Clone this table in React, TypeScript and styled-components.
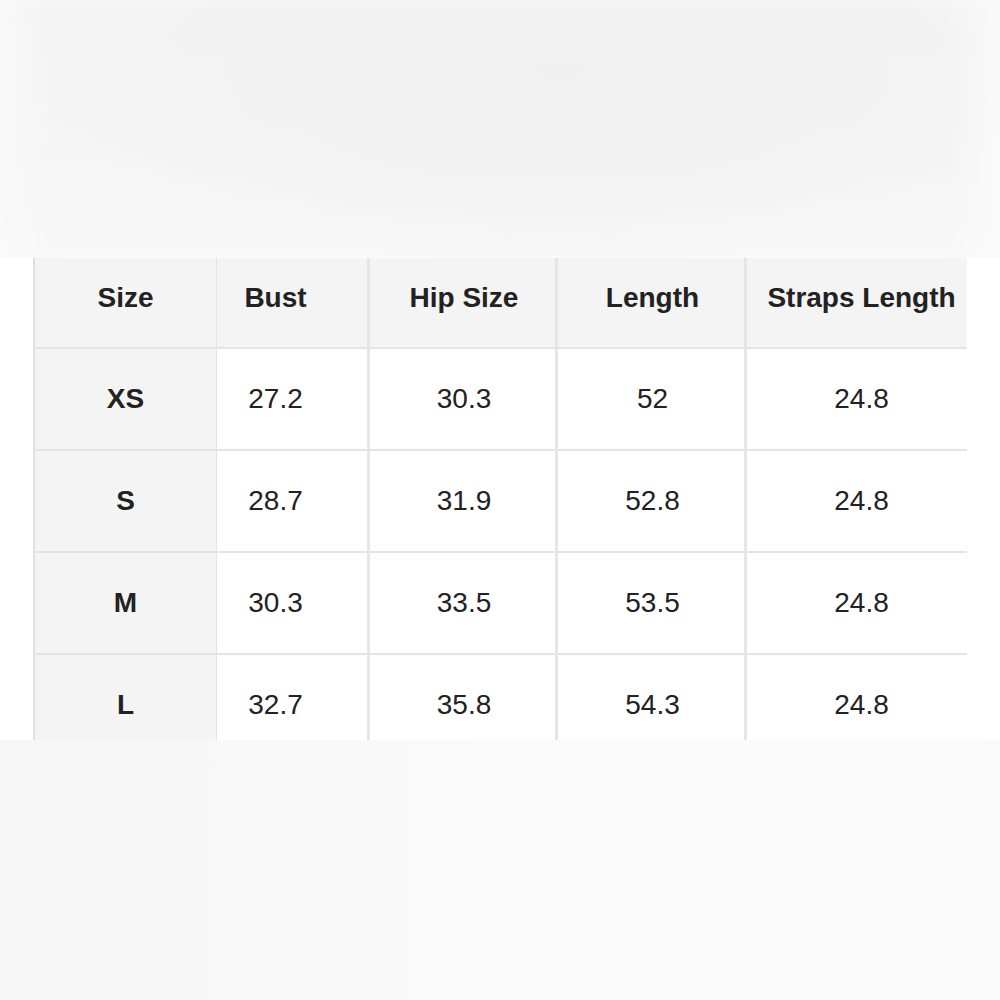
import styled, { createGlobalStyle } from 'styled-components';

const GlobalStyle = createGlobalStyle`
  html, body {
    margin: 0;
    padding: 0;
    background: #ffffff;
  }
  body {
    font-family: 'Liberation Sans', Arial, sans-serif;
  }
`;

const headers = ['Size', 'Bust', 'Hip Size', 'Length', 'Straps Length'];

const rows = [
  ['XS', '27.2', '30.3', '52', '24.8'],
  ['S', '28.7', '31.9', '52.8', '24.8'],
  ['M', '30.3', '33.5', '53.5', '24.8'],
  ['L', '32.7', '35.8', '54.3', '24.8'],
];

const App = () => {
  return (
    <Page>
      <GlobalStyle />
      <TopBand />
      <TableArea>
        <Table>
          {headers.map((h, i) => (
            <Cell key={h} $head $col={i}>
              {h}
            </Cell>
          ))}
          {rows.map((row) =>
            row.map((value, i) => (
              <Cell key={row[0] + i} $col={i}>
                {value}
              </Cell>
            ))
          )}
        </Table>
      </TableArea>
      <BottomBand />
    </Page>
  );
};

const Page = styled.div`
  width: 1000px;
  height: 1000px;
  display: flex;
  flex-direction: column;
  overflow: hidden;
`;

const TopBand = styled.div`
  height: 258px;
  flex-shrink: 0;
  background:
    radial-gradient(ellipse 520px 200px at 560px 70px, #f0f0f0 0%, #f2f2f2 45%, rgba(246, 246, 246, 0) 100%),
    linear-gradient(to bottom, #f3f3f3 0%, #f5f5f5 60%, #f8f8f8 100%);
  box-shadow: inset 40px 0 40px -20px #fafafa, inset -40px 0 40px -20px #fbfbfb;
`;

const TableArea = styled.div`
  height: 482px;
  flex-shrink: 0;
  background: #ffffff;
  padding-left: 33px;
  box-sizing: border-box;
  overflow: hidden;
`;

const Table = styled.div`
  width: 934px;
  overflow: hidden;
  display: grid;
  grid-template-columns: 184px 153px 188px 189px 229px;
  grid-template-rows: 91px repeat(4, 102px);
`;

const Cell = styled.div<{ $head?: boolean; $col: number }>`
  box-sizing: border-box;
  display: flex;
  align-items: center;
  justify-content: center;
  font-size: 28px;
  color: #222222;
  font-weight: ${(p) => (p.$head || p.$col === 0 ? 700 : 400)};
  background: ${(p) => (p.$head || p.$col === 0 ? '#f4f4f4' : '#ffffff')};
  border-bottom: 2px solid #e4e4e4;
  border-right: ${(p) => (p.$col === 0 ? '1px solid #e4e4e4' : '3px solid #e6e6e6')};
  border-left: ${(p) => (p.$col === 0 ? '2px solid #e0e0e0' : 'none')};
  padding-bottom: ${(p) => (p.$head ? '10px' : '0')};
  padding-left: ${(p) => (p.$col === 0 ? '0' : '3px')};
  padding-right: ${(p) => (p.$col === 1 ? '36px' : '0')};
  white-space: nowrap;
`;

const BottomBand = styled.div`
  flex: 1;
  background:
    linear-gradient(to right, #f6f6f6 0%, #f8f8f8 25%, #fafafa 45%, #fbfbfb 80%, #fafafa 100%);
`;

export default App;
